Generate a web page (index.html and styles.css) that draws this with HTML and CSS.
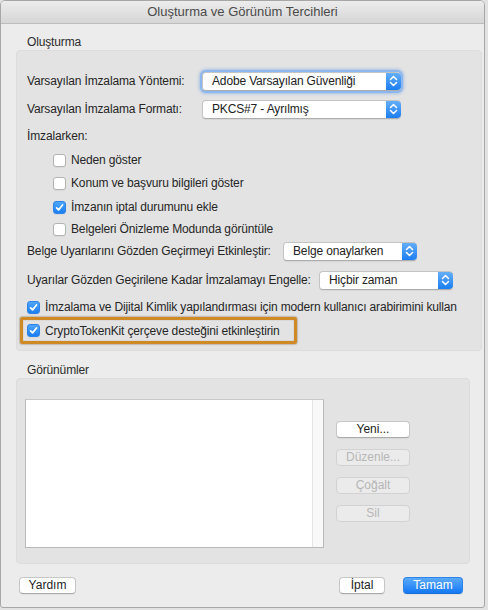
FILE: index.html
```html
<!DOCTYPE html>
<html lang="tr">
<head>
    <meta charset="UTF-8">
    <meta name="viewport" content="width=device-width, initial-scale=1.0">
    <title>Oluşturma ve Görünüm Tercihleri</title>
    <link rel="stylesheet" href="styles.css">
</head>
<body>

    <div class="window">
        <div class="titlebar">Oluşturma ve Görünüm Tercihleri</div>

        <div class="content">
            <div class="group-label">Oluşturma</div>
            <div class="group creation">

                <div class="row row-28">
                    <span class="label label-short">Varsayılan İmzalama Yöntemi:</span>
                    <div class="popup popup-wide focused">
                        <span class="popup-text">Adobe Varsayılan Güvenliği</span>
                        <span class="arrows"><svg width="15" height="16" viewBox="0 0 15 16"><path d="M4.5 6.5 7.5 3.5 10.5 6.5M4.5 9.5 7.5 12.5 10.5 9.5" fill="none" stroke="#fff" stroke-width="1.5" stroke-linecap="round" stroke-linejoin="round"/></svg></span>
                    </div>
                </div>

                <div class="row row-28">
                    <span class="label label-short">Varsayılan İmzalama Formatı:</span>
                    <div class="popup popup-wide">
                        <span class="popup-text">PKCS#7 - Ayrılmış</span>
                        <span class="arrows"><svg width="15" height="16" viewBox="0 0 15 16"><path d="M4.5 6.5 7.5 3.5 10.5 6.5M4.5 9.5 7.5 12.5 10.5 9.5" fill="none" stroke="#fff" stroke-width="1.5" stroke-linecap="round" stroke-linejoin="round"/></svg></span>
                    </div>
                </div>

                <div class="row row-26">
                    <span class="label">İmzalarken:</span>
                </div>

                <div class="row row-22 nested">
                    <span class="check"></span>
                    <span class="label">Neden göster</span>
                </div>
                <div class="row row-24 nested">
                    <span class="check"></span>
                    <span class="label">Konum ve başvuru bilgileri göster</span>
                </div>
                <div class="row row-24 nested">
                    <span class="check on"><svg width="11" height="11" viewBox="0 0 11 11"><path d="M2.6 5.8 4.6 7.9 8.5 3" fill="none" stroke="#fff" stroke-width="1.7" stroke-linecap="round" stroke-linejoin="round"/></svg></span>
                    <span class="label">İmzanın iptal durumunu ekle</span>
                </div>
                <div class="row row-20 nested">
                    <span class="check"></span>
                    <span class="label">Belgeleri Önizleme Modunda görüntüle</span>
                </div>

                <div class="row row-24">
                    <span class="label label-review">Belge Uyarılarını Gözden Geçirmeyi Etkinleştir:</span>
                    <div class="popup popup-narrow">
                        <span class="popup-text">Belge onaylarken</span>
                        <span class="arrows"><svg width="15" height="16" viewBox="0 0 15 16"><path d="M4.5 6.5 7.5 3.5 10.5 6.5M4.5 9.5 7.5 12.5 10.5 9.5" fill="none" stroke="#fff" stroke-width="1.5" stroke-linecap="round" stroke-linejoin="round"/></svg></span>
                    </div>
                </div>

                <div class="row row-34">
                    <span class="label label-block">Uyarılar Gözden Geçirilene Kadar İmzalamayı Engelle:</span>
                    <div class="popup popup-narrow">
                        <span class="popup-text">Hiçbir zaman</span>
                        <span class="arrows"><svg width="15" height="16" viewBox="0 0 15 16"><path d="M4.5 6.5 7.5 3.5 10.5 6.5M4.5 9.5 7.5 12.5 10.5 9.5" fill="none" stroke="#fff" stroke-width="1.5" stroke-linecap="round" stroke-linejoin="round"/></svg></span>
                    </div>
                </div>

                <div class="row row-20">
                    <span class="check on"><svg width="11" height="11" viewBox="0 0 11 11"><path d="M2.6 5.8 4.6 7.9 8.5 3" fill="none" stroke="#fff" stroke-width="1.7" stroke-linecap="round" stroke-linejoin="round"/></svg></span>
                    <span class="label">İmzalama ve Dijital Kimlik yapılandırması için modern kullanıcı arabirimini kullan</span>
                </div>

                <div class="row highlight">
                    <span class="check on"><svg width="11" height="11" viewBox="0 0 11 11"><path d="M2.6 5.8 4.6 7.9 8.5 3" fill="none" stroke="#fff" stroke-width="1.7" stroke-linecap="round" stroke-linejoin="round"/></svg></span>
                    <span class="label">CryptoTokenKit çerçeve desteğini etkinleştirin</span>
                </div>
            </div>

            <div class="group-label second">Görünümler</div>
            <div class="group appearances">
                <div class="listbox">
                    <div class="list-body"></div>
                    <div class="scroll-track"></div>
                </div>
                <div class="side-buttons">
                    <button class="btn">Yeni...</button>
                    <button class="btn disabled">Düzenle...</button>
                    <button class="btn disabled">Çoğalt</button>
                    <button class="btn disabled">Sil</button>
                </div>
            </div>

            <div class="footer">
                <button class="btn btn-help">Yardım</button>
                <div class="footer-right">
                    <button class="btn btn-cancel">İptal</button>
                    <button class="btn primary btn-ok">Tamam</button>
                </div>
            </div>
        </div>
    </div>

</body>
</html>
```

FILE: styles.css
```css
body {
    margin: 0;
    background-color: #e2e2e2;
    font-family: "Liberation Sans", Arial, sans-serif;
    font-size: 12px;
    letter-spacing: -0.15px;
    color: #262626;
}

.window {
    width: 483px;
    height: 606px;
    border: 1px solid #a7a7a7;
    border-radius: 5px 5px 3px 3px;
    background-color: #ececec;
    overflow: hidden;
}

.titlebar {
    height: 22px;
    line-height: 22px;
    text-align: center;
    font-size: 13px;
    letter-spacing: 0;
    color: #4a4a4a;
    background: linear-gradient(#ececec, #d6d6d6);
    border-bottom: 1px solid #bdbdbd;
}

.content {
    padding: 0 12px 0 15px;
}

.group-label {
    height: 15px;
    line-height: 15px;
    margin: 11px 0 0 11px;
    color: #2b2b2b;
}

.group-label.second {
    margin-top: 12px;
}

.group {
    width: 454px;
    background-color: #e3e3e3;
    border: 1px solid #dcdcdc;
    border-radius: 4px;
}

.creation {
    padding: 16px 0 6px 10px;
}

/* rows */
.row {
    display: flex;
    align-items: center;
    white-space: nowrap;
}

.row-20 { height: 20px; }
.row-22 { height: 22px; }
.row-24 { height: 24px; }
.row-26 { height: 26px; }
.row-28 { height: 28px; }
.row-34 { height: 34px; }

.nested {
    padding-left: 26px;
}

.label-short { width: 175px; }
.label-review { width: 256px; }
.label-block { width: 292px; }

.highlight {
    display: inline-flex;
    height: 21px;
    margin-left: -7px;
    padding: 0 14px 0 4px;
    border: 3px solid #cf8a26;
    border-radius: 2px;
    box-shadow: 0 0 2px rgba(60, 40, 0, 0.7), inset 0 0 1px rgba(60, 40, 0, 0.5);
}

/* popup buttons */
.popup {
    display: flex;
    align-items: center;
    height: 17px;
    background-color: #fff;
    border: 1px solid #c4c4c4;
    border-bottom-color: #adadad;
    border-radius: 4px;
    box-shadow: 0 1px 1px rgba(0, 0, 0, 0.06);
}

.popup-wide { width: 197px; }
.popup-narrow { width: 132px; }

.popup.focused {
    box-shadow: 0 0 0 2px #8cb8ef, 0 0 3px 3px rgba(110, 160, 230, 0.5);
}

.popup-text {
    flex: 1;
    padding-left: 9px;
    color: #222;
}

.arrows {
    display: flex;
    align-items: center;
    justify-content: center;
    width: 15px;
    height: 17px;
    margin-right: -1px;
    background: linear-gradient(#64aefa, #1b7ef2);
    border-radius: 0 4px 4px 0;
}

/* checkboxes */
.check {
    display: inline-flex;
    align-items: center;
    justify-content: center;
    width: 11px;
    height: 11px;
    margin-right: 5px;
    background-color: #fff;
    border: 1px solid #b3b3b3;
    border-radius: 3px;
    box-shadow: 0 1px 1px rgba(0, 0, 0, 0.05);
}

.check.on {
    background: linear-gradient(#4fa5fb, #1b7ff3);
    border-color: #2c83ea;
}

/* appearances group */
.appearances {
    display: flex;
    height: 186px;
    box-sizing: border-box;
    padding: 20px 0 0 8px;
}

.listbox {
    display: flex;
    width: 297px;
    height: 147px;
    border: 1px solid #b9b9b9;
    border-top-color: #c8c8c8;
    background-color: #fff;
}

.list-body {
    flex: 1;
}

.scroll-track {
    width: 10px;
    background-color: #f9f9f9;
    border-left: 1px solid #e4e4e4;
}

.side-buttons {
    display: flex;
    flex-direction: column;
    gap: 11px;
    margin: 22px 0 0 12px;
}

/* push buttons */
.btn {
    height: 17px;
    padding: 0;
    font-family: inherit;
    font-size: 12px;
    letter-spacing: 0;
    line-height: 15px;
    color: #1e1e1e;
    background-color: #fff;
    border: 1px solid #c6c6c6;
    border-bottom-color: #aaaaaa;
    border-radius: 4px;
    box-shadow: 0 1px 1px rgba(0, 0, 0, 0.05);
}

.side-buttons .btn {
    width: 74px;
}

.btn.disabled {
    color: #b6b6b6;
    background-color: #ebebeb;
    border-color: #d2d2d2;
    box-shadow: none;
}

.btn.primary {
    color: #fff;
    background: linear-gradient(#5cabfb, #1378f5);
    border-color: #2f84ea;
    border-bottom-color: #1c6ed8;
}

.footer {
    display: flex;
    justify-content: space-between;
    margin-top: 13px;
    padding: 0 9px 0 3px;
}

.footer-right {
    display: flex;
    gap: 18px;
}

.btn-help { width: 57px; }
.btn-cancel { width: 46px; }
.btn-ok { width: 60px; }
```
